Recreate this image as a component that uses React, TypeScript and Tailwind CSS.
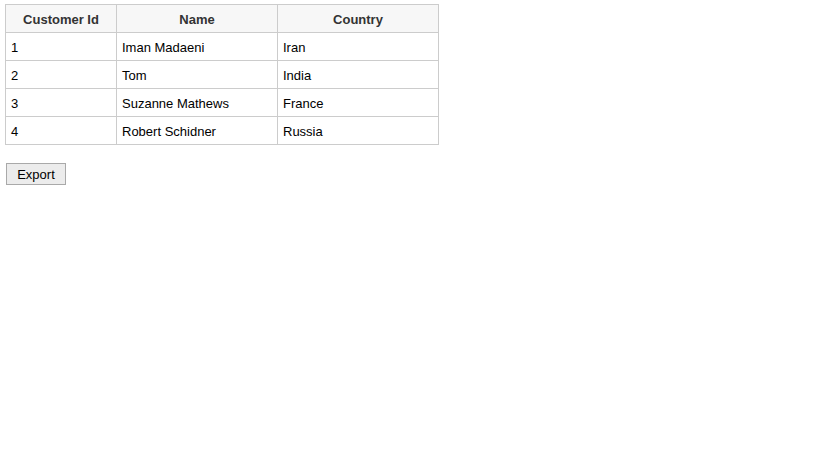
const customers = [
  { id: 1, name: "Iman Madaeni", country: "Iran" },
  { id: 2, name: "Tom", country: "India" },
  { id: 3, name: "Suzanne Mathews", country: "France" },
  { id: 4, name: "Robert Schidner", country: "Russia" },
];

export default function App() {
  return (
    <div className="min-h-[460px] bg-white pl-[5px] pt-[4px] font-['Liberation_Sans',Arial,sans-serif] text-[13px] text-black">
      <table className="border-collapse">
        <thead>
          <tr className="h-[28px] bg-[#f7f7f7]">
            <th className="w-[111px] border border-[#ccc] px-[5px] pt-[3px] text-center font-bold text-[#333]">Customer Id</th>
            <th className="w-[161px] border border-[#ccc] px-[5px] pt-[3px] text-center font-bold text-[#333]">Name</th>
            <th className="w-[161px] border border-[#ccc] px-[5px] pt-[3px] text-center font-bold text-[#333]">Country</th>
          </tr>
        </thead>
        <tbody>
          {customers.map((c) => (
            <tr key={c.id} className="h-[28px]">
              <td className="border border-[#ccc] px-[5px] pt-[3px]">{c.id}</td>
              <td className="border border-[#ccc] px-[5px] pt-[3px]">{c.name}</td>
              <td className="border border-[#ccc] px-[5px] pt-[3px]">{c.country}</td>
            </tr>
          ))}
        </tbody>
      </table>
      <button
        type="button"
        className="ml-[1px] mt-[18px] h-[22px] w-[60px] border border-[#a9a9a9] bg-[#ececec] text-[13px] leading-none text-black"
      >
        Export
      </button>
    </div>
  );
}
